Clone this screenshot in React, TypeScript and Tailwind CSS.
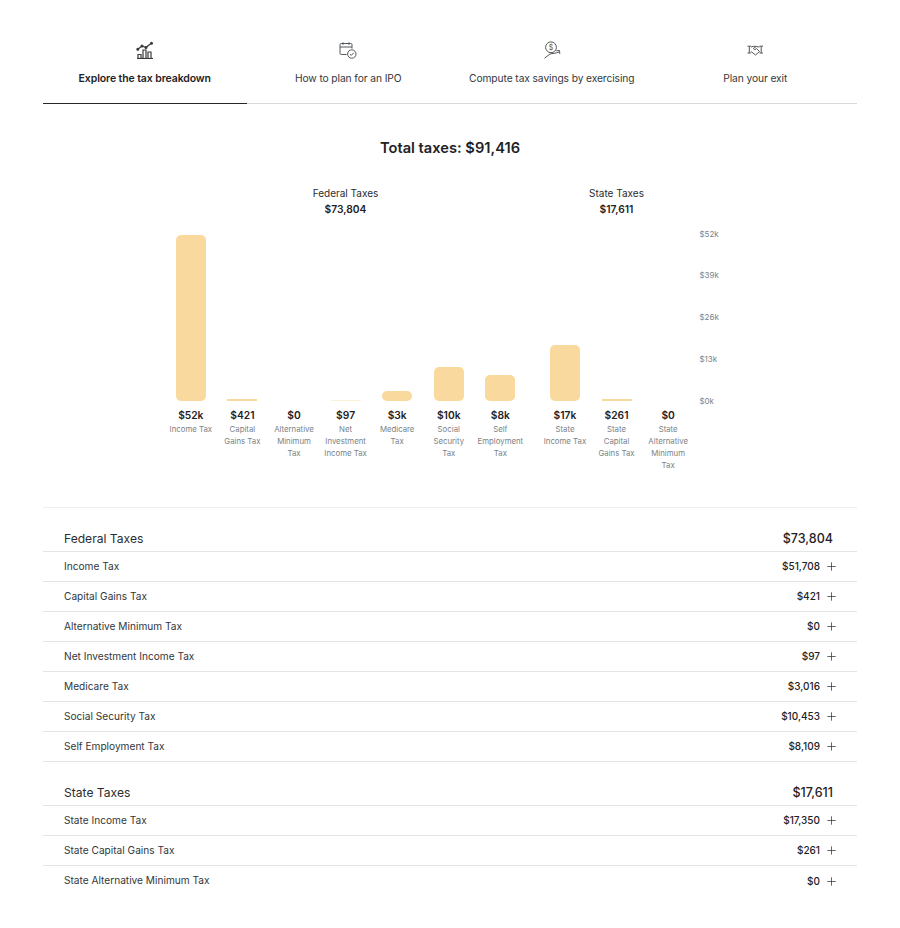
import { Plus } from "lucide-react";

const TABS = [
  { label: "Explore the tax breakdown", icon: ChartIcon, active: true },
  { label: "How to plan for an IPO", icon: CalendarIcon, active: false },
  { label: "Compute tax savings by exercising", icon: SavingsIcon, active: false },
  { label: "Plan your exit", icon: HandshakeIcon, active: false },
];

type Bar = { value: string; label: string; height: number; faint?: boolean };

const FEDERAL_BARS: Bar[] = [
  { value: "$52k", label: "Income Tax", height: 166 },
  { value: "$421", label: "Capital\nGains Tax", height: 2 },
  { value: "$0", label: "Alternative\nMinimum\nTax", height: 0 },
  { value: "$97", label: "Net\nInvestment\nIncome Tax", height: 1, faint: true },
  { value: "$3k", label: "Medicare\nTax", height: 10 },
  { value: "$10k", label: "Social\nSecurity\nTax", height: 34 },
  { value: "$8k", label: "Self\nEmployment\nTax", height: 26 },
];

const STATE_BARS: Bar[] = [
  { value: "$17k", label: "State\nIncome Tax", height: 56 },
  { value: "$261", label: "State\nCapital\nGains Tax", height: 2 },
  { value: "$0", label: "State\nAlternative\nMinimum\nTax", height: 0 },
];

const AXIS = ["$52k", "$39k", "$26k", "$13k", "$0k"];

const FEDERAL_ROWS = [
  ["Income Tax", "$51,708"],
  ["Capital Gains Tax", "$421"],
  ["Alternative Minimum Tax", "$0"],
  ["Net Investment Income Tax", "$97"],
  ["Medicare Tax", "$3,016"],
  ["Social Security Tax", "$10,453"],
  ["Self Employment Tax", "$8,109"],
];

const STATE_ROWS = [
  ["State Income Tax", "$17,350"],
  ["State Capital Gains Tax", "$261"],
  ["State Alternative Minimum Tax", "$0"],
];

function ChartIcon() {
  return (
    <svg width="18" height="18" viewBox="0 0 18 18" fill="none" stroke="#3a3a3a" strokeWidth="1.200">
      <path d="M1 17.500h16" />
      <path d="M2 17v-3.500h3V17M7 17V9h3v8M12 17v-6h3v6" />
      <path d="M1.500 8.500 6 5l4 1.500 5.500-4.500" />
      <circle cx="1.800" cy="8.300" r="0.900" fill="#3a3a3a" />
      <circle cx="6" cy="5" r="0.900" fill="#3a3a3a" />
      <circle cx="10" cy="6.500" r="0.900" fill="#3a3a3a" />
      <circle cx="15.500" cy="2.300" r="0.900" fill="#3a3a3a" />
    </svg>
  );
}

function CalendarIcon() {
  return (
    <svg width="18" height="18" viewBox="0 0 18 18" fill="none" stroke="#55595c" strokeWidth="1">
      <path d="M7.500 13.500H2.200A1.200 1.200 0 0 1 1 12.300V3.700a1.200 1.200 0 0 1 1.200-1.200h9.600A1.200 1.200 0 0 1 13 3.700V7.500" />
      <path d="M1 6h12M4 1.300v2.600M10 1.300v2.600" />
      <circle cx="12.800" cy="13" r="4.200" />
      <path d="m10.900 13.100 1.400 1.300 2.400-2.600" />
    </svg>
  );
}

function SavingsIcon() {
  return (
    <svg width="18" height="18" viewBox="0 0 18 18" fill="none" stroke="#55595c" strokeWidth="1">
      <circle cx="8" cy="6.300" r="5.400" />
      <text x="8" y="8.800" textAnchor="middle" fontSize="7" fill="#55595c" stroke="none" fontFamily="Inter, sans-serif">$</text>
      <path d="M1.500 17.200 7 13c2.500-.8 5.500-.4 9.200-2" />
      <path d="M13.200 9.800l3.300-.3.300 3.400" />
    </svg>
  );
}

function HandshakeIcon() {
  return (
    <svg width="18" height="18" viewBox="0 0 18 18" fill="none" stroke="#55595c" strokeWidth="1">
      <path d="M1.500 5.200H5M1.500 12H5M3.300 5.200V12M13.500 5.200H17M13.500 12H17M15.200 5.200V12" />
      <path d="M5 6l3-.8 2 .3 3.500.5M10 5.500 7.300 7.600 8.800 8.800l1.700-1.300 3 3M5 10.500l4.500 3.500 4-3.500" />
    </svg>
  );
}

function BarColumn({ bar }: { bar: Bar }) {
  return (
    <div className="flex w-[51.6px] flex-col items-center">
      <div className="flex h-[167px] items-end">
        {bar.height > 0 && (
          <div
            className={`w-[30px] ${bar.height > 4 ? "rounded-[5px]" : ""} ${bar.faint ? "bg-[#fdf0d8]" : "bg-[#f9d99e]"}`}
            style={{ height: bar.height }}
          />
        )}
      </div>
      <div className="mt-[7px] text-[10.250px] leading-[14px] font-semibold text-[#1f2225]">{bar.value}</div>
      <div className="mt-[0.500px] text-center text-[7.800px] leading-[12px] whitespace-pre-line text-[#7b8288]">{bar.label}</div>
    </div>
  );
}

function GroupHead({ title, total, width }: { title: string; total: string; width: string }) {
  return (
    <div className={`flex flex-col items-center ${width}`}>
      <div className="text-[10px] leading-[16px] text-[#2a2d30]">{title}</div>
      <div className="text-[10.250px] leading-[16px] font-semibold text-[#1f2225]">{total}</div>
    </div>
  );
}

function TaxSection({ title, total, rows }: { title: string; total: string; rows: string[][] }) {
  return (
    <div>
      <div className="flex h-[26px] items-center justify-between border-b border-[#e4e5e3] pt-[2px] pr-[24px] pl-[21px]">
        <span className="text-[12.100px] text-[#2a2d30]">{title}</span>
        <span className="text-[12.500px] font-medium text-[#1f2225]">{total}</span>
      </div>
      {rows.map(([label, value], i) => (
        <div
          key={label}
          className={`flex h-[30px] items-center justify-between pt-[1px] pr-[19.500px] pl-[21px] ${i < rows.length - 1 || rows.length > 3 ? "border-b border-[#e4e5e3]" : ""}`}
        >
          <span className="text-[10.150px] text-[#33373a]">{label}</span>
          <span className="flex items-center gap-[4.500px]">
            <span className="text-[10px] font-medium text-[#1f2225]">{value}</span>
            <Plus size={13} strokeWidth={1.400} className="text-[#33373a]" />
          </span>
        </div>
      ))}
    </div>
  );
}

export default function App() {
  return (
    <div className="min-h-[928px] bg-white px-[43px] pt-[41px] font-['Inter',sans-serif]">
      <div className="grid grid-cols-4">
        {TABS.map(({ label, icon: Icon, active }) => (
          <div
            key={label}
            className={`flex h-[63px] flex-col items-center border-b-[1.500px] ${active ? "border-[#26292c]" : "border-[#d9d9d6]"}`}
          >
            <Icon />
            <div
              className={`leading-[16px] ${active ? "mt-[11.500px] text-[10.500px] tracking-[-0.1px] font-semibold text-[#1f2225]" : "mt-[10.500px] text-[10.250px] tracking-[-0.1px] text-[#33373a]"}`}
            >
              {label}
            </div>
          </div>
        ))}
      </div>

      <h1 className="mt-[33px] text-center text-[14.660px] leading-[22px] font-semibold text-[#1f2225]">Total taxes: $91,416</h1>

      <div className="mt-[26px] flex pl-[122px]">
        <GroupHead title="Federal Taxes" total="$73,804" width="w-[361px]" />
        <div className="w-[13px]" />
        <GroupHead title="State Taxes" total="$17,611" width="w-[155px]" />
      </div>

      <div className="mt-[17px] flex pl-[122px]">
        <div className="flex">
          {FEDERAL_BARS.map((bar) => (
            <BarColumn key={bar.label} bar={bar} />
          ))}
        </div>
        <div className="w-[13px]" />
        <div className="flex">
          {STATE_BARS.map((bar) => (
            <BarColumn key={bar.label} bar={bar} />
          ))}
        </div>
        <div className="-mt-[6.500px] ml-[5.500px] flex h-[179px] flex-col justify-between">
          {AXIS.map((tick) => (
            <div key={tick} className="text-[8px] leading-[12px] text-[#7b8288]">
              {tick}
            </div>
          ))}
        </div>
      </div>

      <div className="mt-[36px] border-t border-[#eeeeec] pt-[18px]">
        <TaxSection title="Federal Taxes" total="$73,804" rows={FEDERAL_ROWS} />
        <div className="h-[18px]" />
        <TaxSection title="State Taxes" total="$17,611" rows={STATE_ROWS} />
      </div>
    </div>
  );
}
